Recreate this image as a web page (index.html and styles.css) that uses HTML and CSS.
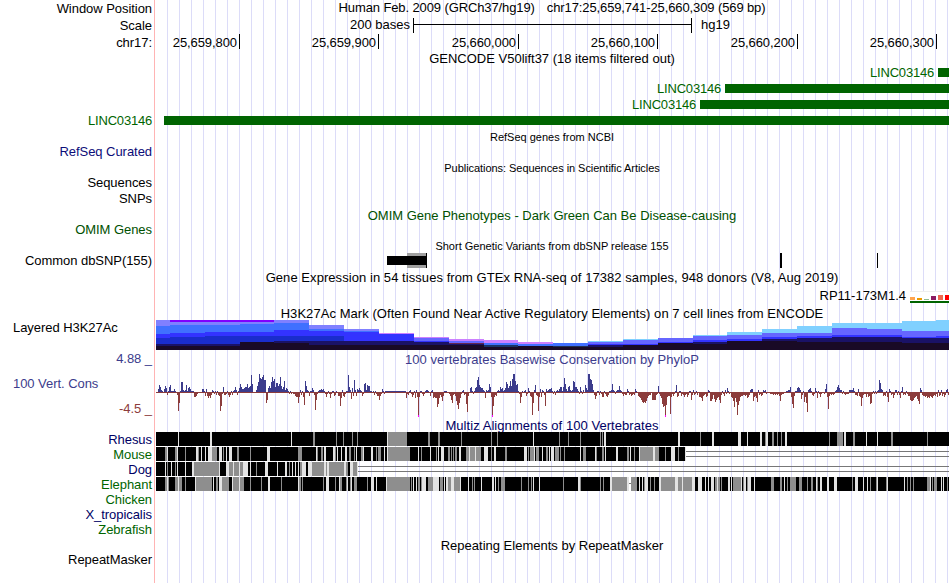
FILE: index.html
```html
<!DOCTYPE html>
<html lang="en">
<head>
    <meta charset="UTF-8">
    <title>Human chr17:25,659,741-25,660,309</title>
    <link rel="stylesheet" href="styles.css">
</head>
<body>
    <div class="browser">
        <div class="row h17"><div class="label">Window Position</div><div class="title header"><span>Human Feb. 2009 (GRCh37/hg19)</span><span>chr17:25,659,741-25,660,309 (569 bp)</span></div></div>
        <div class="row h17"><div class="label">Scale</div><div class="scale"><span>200 bases</span><i class="ruler"></i><span>hg19</span></div></div>
        <div class="row h17"><div class="label">chr17:</div><div class="ticks"><span>25,659,800</span><span>25,659,900</span><span>25,660,000</span><span>25,660,100</span><span>25,660,200</span><span>25,660,300</span></div></div>

        <div class="row h13"><div class="label"></div><div class="title">GENCODE V50lift37 (18 items filtered out)</div></div>
        <div class="row h16"><div class="label"></div><div class="gene"><span>LINC03146</span><i class="exon w11"></i></div></div>
        <div class="row h16"><div class="label"></div><div class="gene"><span>LINC03146</span><i class="exon w224"></i></div></div>
        <div class="row h16"><div class="label"></div><div class="gene"><span>LINC03146</span><i class="exon w249"></i></div></div>
        <div class="row h16"><div class="label gene-name">LINC03146</div><div class="gene"><i class="exon w785"></i></div></div>

        <div class="row h16"><div class="label"></div><div class="title small">RefSeq genes from NCBI</div></div>
        <div class="row h16"><div class="label navy">RefSeq Curated</div></div>
        <div class="row h15"><div class="label"></div><div class="title small tight">Publications: Sequences in Scientific Articles</div></div>
        <div class="row h16"><div class="label">Sequences</div></div>
        <div class="row h15"><div class="label">SNPs</div></div>
        <div class="row h16"><div class="label"></div><div class="title omim low">OMIM Gene Phenotypes - Dark Green Can Be Disease-causing</div></div>
        <div class="row h15"><div class="label omim">OMIM Genes</div></div>
        <div class="row h16"><div class="label"></div><div class="title small">Short Genetic Variants from dbSNP release 155</div></div>
        <div class="row h16"><div class="label">Common dbSNP(155)</div><svg id="dbsnp" width="794" height="16" viewBox="155 253 794 16"></svg></div>

        <div class="row h16"><div class="label"></div><div class="title wide">Gene Expression in 54 tissues from GTEx RNA-seq of 17382 samples, 948 donors (V8, Aug 2019)</div></div>
        <div class="row h20"><div class="label"></div><div class="gtex"><span>RP11-173M1.4</span><svg id="gtex" width="39" height="20" viewBox="910 285 39 20"></svg></div></div>

        <div class="row h15"><div class="label"></div><div class="title wide">H3K27Ac Mark (Often Found Near Active Regulatory Elements) on 7 cell lines from ENCODE</div></div>
        <div class="row h30"><div class="label left">Layered H3K27Ac</div><svg id="h3k27ac" width="794" height="30" viewBox="155 0 794 30"></svg></div>

        <div class="row h67">
            <div class="label limits blue"><span>4.88 _</span><span class="name">100 Vert. Cons</span><span class="min">-4.5 _</span></div>
            <div class="wiggle"><div class="title blue">100 vertebrates Basewise Conservation by PhyloP</div><svg id="phylop" width="794" height="50" viewBox="155 367 794 50"></svg></div>
        </div>

        <div class="row h15"><div class="label"></div><div class="title midnight wide">Multiz Alignments of 100 Vertebrates</div></div>
        <div class="row h15"><div class="label midnight">Rhesus</div><svg id="rhesus" width="794" height="15" viewBox="155 0 794 15"></svg></div>
        <div class="row h15"><div class="label green">Mouse</div><svg id="mouse" width="794" height="15" viewBox="155 0 794 15"></svg></div>
        <div class="row h15"><div class="label midnight">Dog</div><svg id="dog" width="794" height="15" viewBox="155 0 794 15"></svg></div>
        <div class="row h15"><div class="label green">Elephant</div><svg id="elephant" width="794" height="15" viewBox="155 0 794 15"></svg></div>
        <div class="row h15"><div class="label green">Chicken</div></div>
        <div class="row h15"><div class="label midnight">X_tropicalis</div></div>
        <div class="row h15"><div class="label green">Zebrafish</div></div>
        <div class="row h15"><div class="label"></div><div class="title">Repeating Elements by RepeatMasker</div></div>
        <div class="row h15"><div class="label">RepeatMasker</div></div>
    </div>
    <script src="tracks.js"></script>
</body>
</html>
```
FILE: styles.css
```css
body {
    margin: 0;
    background-color: #fff;
    font-family: "Liberation Sans", Arial, Helvetica, sans-serif;
    font-size: 13px;
    color: #000;
}

/* red line marks the label edge, blue guidelines repeat every 12px */
.browser {
    width: 949px;
    height: 583px;
    overflow: hidden;
    background-image:
        linear-gradient(#ffb4b4, #ffb4b4),
        repeating-linear-gradient(to right, #dcdcf8 0, #dcdcf8 1px, transparent 1px, transparent 12px);
    background-size: 1px 100%, 782px 100%;
    background-position: 154px 0, 167px 0;
    background-repeat: no-repeat;
}

.row {
    display: grid;
    grid-template-columns: 155px 794px;
    white-space: nowrap;
}

.h13 { height: 13px; line-height: 15px; }
.h15 { height: 15px; line-height: 16px; }
.h16 { height: 16px; line-height: 16px; }
.h17 { height: 17px; line-height: 17px; }
.h20 { height: 20px; line-height: 21px; }
.h30 { height: 30px; line-height: 16px; }
.h67 { height: 67px; line-height: 17px; }

.label {
    padding-right: 3px;
    text-align: right;
    letter-spacing: -0.05px;
}

.label.left {
    padding-left: 13px;
    text-align: left;
}

.h16 .label {
    line-height: 15px;
}

.title {
    text-align: center;
}

.h15 .title,
.h16 .title {
    line-height: 18px;
}

.h16 .title.low {
    line-height: 20px;
}

.title.small {
    font-size: 11px;
}

.h15 .title.tight {
    line-height: 16px;
    letter-spacing: -0.05px;
}

.title.wide {
    letter-spacing: 0.06px;
}

.header {
    display: flex;
    justify-content: center;
    gap: 12px;
    line-height: 15px;
    letter-spacing: -0.11px;
}

.green { color: #006400; }
.omim { color: #005000; }
.navy { color: #0c0c78; }
.midnight { color: #000064; }
.blue { color: #3c3c8c; }

.scale {
    display: flex;
    align-items: flex-start;
    padding-left: 195px;
    line-height: 15px;
}

.ruler {
    box-sizing: border-box;
    width: 279px;
    height: 15px;
    margin: 1px 9px 0 3px;
    border: solid #000;
    border-width: 0 1px;
    background: linear-gradient(#000, #000) 0 6px / 100% 1px no-repeat;
}

.ticks {
    display: grid;
    grid-template-columns: 85px 139px 140px 139px 140px 139px;
}

.ticks span {
    height: 15px;
    padding-right: 2px;
    border-right: 1px solid #000;
    text-align: right;
    letter-spacing: -0.08px;
}

.gene {
    display: flex;
    justify-content: flex-end;
    gap: 4px;
    color: #006400;
    line-height: 17px;
    letter-spacing: -0.2px;
}

.h16 .gene-name {
    color: #006400;
    line-height: 17px;
    letter-spacing: -0.2px;
}

.exon {
    height: 9px;
    margin-top: 4px;
    background-color: #006400;
}

.w11 { width: 11px; }
.w224 { width: 224px; }
.w249 { width: 249px; }
.w785 { width: 785px; }

.gtex {
    display: flex;
    justify-content: flex-end;
    gap: 4px;
}

.limits {
    display: flex;
    flex-direction: column;
    justify-content: space-between;
}

.limits .name {
    padding-left: 13px;
    text-align: left;
}

.limits .min {
    color: #8c3c3c;
}

.wiggle .title {
    height: 17px;
    line-height: 19px;
    letter-spacing: 0.04px;
}

svg {
    display: block;
    shape-rendering: crispEdges;
}
```
FILE: tracks.js
```js
function rect(id, x, y, w, h, fill) {
    const r = document.createElementNS('http://www.w3.org/2000/svg', 'rect');
    r.setAttribute('x', x);
    r.setAttribute('y', y);
    r.setAttribute('width', w);
    r.setAttribute('height', h);
    r.setAttribute('fill', fill);
    document.getElementById(id).appendChild(r);
}

// variants
rect('dbsnp', 407, 253, 19, 15, '#a0a0a0');
rect('dbsnp', 387, 256, 39, 9, '#000');
rect('dbsnp', 426, 253, 1, 15, '#000');
rect('dbsnp', 780, 253, 2, 15, '#000');
rect('dbsnp', 877, 253, 1, 15, '#000');

// tissue expression
rect('gtex', 910, 291, 39, 10, '#fff');
rect('gtex', 910, 291, 39, 1, '#eee');
[[910, 3, '#ffa54f'], [917, 2, '#ee9a00'], [924, 1, '#8fbc8f'], [931, 4, '#8b1c62'], [938, 5, '#ee6a50'], [945, 5, '#ff0000']]
    .forEach(b => rect('gtex', b[0], 300 - b[1], 5, b[1], b[2]));
rect('gtex', 910, 301, 39, 2, '#006400');

// histone mark: left edge, then [top, colour] layers
const L = '#8080ff', B = '#4070ff', M = '#3333ff', R = '#1a2dcc', N = '#1a1266', K = '#190a26', P = '#cc80ff', C = '#80d0ff', S = '#6666ff', V = '#8000ff';
const marks = [
    [156, 0, L, 6, B, 14, M, 18, R, 24, N, 26, K],
    [170, 0, V, 2, L, 5, B, 13, M, 17, R, 24, N, 26, K],
    [205, 0, V, 2, L, 5, B, 12, M, 16, R, 24, N, 26, K],
    [240, 0, V, 2, L, 4, B, 12, M, 16, R, 22, K],
    [274, 0, L, 3, B, 10, M, 16, R, 21, N, 23, K],
    [309, 5, L, 9, B, 11, M, 16, R, 21, N, 25, K],
    [344, 9, L, 11, B, 12, M, 21, N, 25, K],
    [379, 13, P, 14, M, 21, N, 25, K],
    [414, 17, P, 18, S, 21, M, 22, N, 25, K],
    [449, 19, P, 21, S, 23, '#66264d', 24, N, 25, K],
    [484, 20, P, 23, B, 25, '#1a3366', 27, K],
    [518, 22, P, 24, B, 26, K],
    [553, 23, B, 26, '#203050', 27, K],
    [588, 21, C, 22, S, 24, M, 25, N, 27, K],
    [623, 19, C, 20, S, 24, M, 25, K],
    [658, 18, S, 22, M, 23, K],
    [693, 15, C, 16, S, 20, M, 22, N, 24, K],
    [727, 12, C, 15, S, 19, M, 21, K],
    [762, 9, C, 13, S, 17, M, 19, N, 21, K],
    [797, 6, C, 13, S, 16, M, 18, N, 22, K],
    [832, 3, C, 8, S, 15, M, 17, N, 22, K],
    [867, 3, C, 9, S, 15, M, 17, N, 22, K],
    [902, 1, C, 11, S, 17, M, 18, N, 23, K],
    [936, 0, C, 11, S, 16, M, 18, N, 23, K],
    [949]
];
for (let i = 0; i < marks.length - 1; i++) {
    const m = marks[i];
    for (let j = 1; j < m.length; j += 2) {
        rect('h3k27ac', m[0], m[j], marks[i + 1][0] - m[0], 30 - m[j], m[j + 1]);
    }
}

// conservation scores: start position, then one value per pixel
const scores = [
    [158, 3, 7, 5, 2, 1], [164, 3, 6, 4, -3, 1, 5, 7, 1, 1, 1, 3, 1, -1, -3, -19, -11, 1, 10, 10, 2, 1, 2, 7, 1, 4, 5, 3, 1, 1, 1, -5, -5, -4, -2],
    [202, 3, 3, 1, -4, 3, -4, -6, -4, -6, -3, 2, 1, -2, 1, -3, 1, -3, -4, -19, -14, -2, 5, -3, -3, -2, 1, -3, -5, -3, 1, -3, 1, 2, 5, 2, -3, 1, 4, 8, 5, 3, 3, 4, 5, 5, 8, 4, 5, 6, 17, 8],
    [256, 2, 6, 10, 18, 14, 13, 15, 17, 12, 12, -11, -8, 4, 6, 4, 10, 15, 11, 13, 5, 9, 9, 6, 8, 15, 6, 3, 5, 11, 2, 4, 3, 1, -2, 1, -2],
    [293, -2, -2, -4, -5, -5, -11, -5, 2, -3, 1, -5, -13, 11, 6, 2, 1, -4, 1, 1, 4, 2, -3, -18, -8, -2, 1, 2, 2, 3, 2, 3, 1, -2, -5, -2, 1, -2, -6, -2, 1, 1, -4, -3, 1],
    [338, -4, -4, -14, -6, 2, -4, -5, -2, 1, 1, 17, 5, 2, -7, 4, -4, 12, 2, -4, 3, 2, 4, 2, 1, -4, -2, 8, 9, 2, 7, 6, 6, 1, 1],
    [373, 1, -3, 1, -2, -4, -4, -8, -4, -2, 3, 1, -2, 1, 1, 1, 1, 1, 1, 1, 1, 1, 1, 1, 1, 1, 1, 1, 1, 1, 1, 1, 1, 1, -6, -2, -3, 1, 2, -2, -5, -3, 1],
    [415, -6, 2, -5, -25, -5, 1, 1, -2, -4, -2, 1, 2, 2, 1],
    [430, -4, 1, 2, -6, -5, -6, -6, -15, -12, -6, -3, -5, -9, -4, 1, 1, 1], [449, -2, -4, -8, -11, -3, -2, -4, -9, -13, -17, -11, -6, -2, 1, 2, -3, -2, -12, -20, -4],
    [470, 4, 5, 1, -2, 1, 4, 5, 12, 15, 7, 5, 4, 4, 2, 1, -6, 2, 1],
    [488, 2, 8, 5, -5, -25, -14, -5, -3, -4, 1, 2, 1, 5, 3, 4, 1, 2, 4, 10, 8, 4, 6, 11, 6, 13, 18, 18, 11, 7, 8, 1, -2, -11, -5, 1],
    [524, 1, 2, -4, -2, 4, 1, -4, -5, -23, -11, 2, 7, -3, -4, -19, -5, 3, -5, 2, 1, -3, -14, 3, 1, 2, 3, 3, 4, 1, -2, 1, -3, 1, 2, 1],
    [559, 3, 5, 5, 1, 5, 14, 8, 3, 1, 5, 6, 2, 1, 2, 11, 10, 5, 5, 3, 1, -2, 5, 1, -2, 2],
    [585, 7, 4, 2, 18, 18, 13, 12, 8, 2],
    [594, -3, -7, -4, 1, 1, -3, 1, -2, -5, -5, 1, -2, -4, -5, -3, 1, 1, 2, 8, 2, 1, -2, 1, 2, 2, 6, 2, 1, -2, -4, -2, -3, -3, 3, 1, -3, -2, -4, -3, -2, -3, 3, 1],
    [638, -4, -5, -6, -8, -10, -11, -10, -11, -9, -6, -4, -3, -3],
    [652, -8, -8, -8, -8, -3, -2, 6, -2, -4, -6, -12, -15, -14, -25, -13, -5, -4, -4, -22, -5, -2, -4, -2, 1, 7, -5, -4, 1, 1, -4, -2, -3, -5, -3],
    [686, -2, -5, -3, 1, 1, -8, -3, 2, -3, -2, 1, -3],
    [699, -5, -5, -6, -9, -4, -3, -2, -5, -4, 2, 1, -9, -9, -7, -3, -7, -10, -8, -6, -5, -8, -11, -3, 1, -2, -4, 2, -2, 4, 1, -2],
    [731, -5, -6, -9, -15, -6, -10, -23, -13, -9, -5, -4, -4, -3, -3, -4, -3, -6, -5, -3, 2],
    [751, 3, 3, -9, -5, -4, -6, -10, 2, -3, -2, -4, -3, 2, 1, 2, -2],
    [770, -2, -2, -2, -3, -2, -3, -2, -3, -2, -4, -9, -3, -2, -2, -1, -1, 1, 1, 2, 2, 5, -5, -12, -16, -4, 1],
    [796, 1, 4, 5, 4, 2, -7, -3, 1, -10, -5, -11, -20, 2, 3, 4, 1, -3, -4, -2, 4, 1, -6, 1, -2, -5, -2],
    [824, -2, 3, 8, -5, -17, -4, -2, -3, -2, -3, -2, 1],
    [836, 2, 5, 7, 4, 2, 2, -2, 1, -2, -3, -2, -2, -2, 2, 2, 2, 2, 4, 1, -3, -3, -4, 3, -4, -5, -14, -6, -3, -2, -2, -5, -2, -5, -4, -12, -11, -2, 1, -2, 1, -2, 1, 2, 12, 9, 3, 2],
    [883, -4, -3, -4, 1, -5, -10, 3, 1, -3, -2, -6, -3, 2, 2, -3, 1, -3, -6, 1, 5, -3, -2, -3, 1, -2, -4, -4, -8, -9, -9, -8, -6, -5, -4, -7, -9, -12, 4, 2, -3, -4, -4, -5, -4, -6, -5, -6, -4, -5, -6, -4, -3, -4, -2, -5, 2, -4, -3, 2, -4, -2, -5, -3, 2, 3, -3]
];
rect('phylop', 156, 392, 793, 1, '#8c3c3c');
scores.forEach(s => s.slice(1).forEach((v, i) => {
    if (v > 0) {
        rect('phylop', s[0] + i, 392 - v, 1, v, '#3c3c8c');
    } else {
        rect('phylop', s[0] + i, 392, 1, -v, '#8c3c3c');
    }
}));
// scores clipped at the lower limit
[418, 492, 665].forEach(x => rect('phylop', x, 415, 1, 2, '#f0f'));

// alignments: black with grey (g) and light (l) stretches
function align(id, end, stripes) {
    rect(id, 156, 0, end - 156, 14, '#000');
    stripes.split(' ').forEach(s => {
        const p = s.slice(1).split('-');
        rect(id, p[0], 0, p[1] || 1, 14, s[0] === 'g' ? '#8e8e8e' : '#e3e3e3');
    });
    if (end < 949) {
        rect(id, end, 4, 949 - end, 1, '#777');
        rect(id, end, 9, 949 - end, 1, '#777');
    }
}
align('rhesus', 949, 'l178 l210-2 l291 g313-2 g336 g343 g352 g357 l387 g388-19 g428-2 g438-2 g461 g491 g497 l533 g559 g568 g580 g600 g602 l604-2 l678-2 g700 l712-2 l738-3 l747 l760-2 g765 l766-2 g772-2 g777 g781 l785-2 g829 g837-6 l844-2 g853-2 l866 l877 g891-2 g927');
align('mouse', 686, 'g165-2 l167 g175-2 l177 g185 l196-2 g198 l201 l205 l208-4 g212-5 l219-3 g223 l226 l229-3 g237-2 g250 l267-3 g298-4 l316 g317 g321-2 l324-2 l333-2 g335 l337 l341 l345-2 g349-2 g354 l356 g361-2 l363 l371-2 g376 g378-3 l384 l387 g388-22 l418 g421 l430 g436 l438 l441-3 g448-2 g451 g453 g455-2 l459-2 g466-3 l469 g470-5 l475 g476-5 l484-4 g491 l494-2 g505-2 l524-3 g528 g530-4 l534 g536-3 l542 g546-2 l549 l551-3 g555-4 g560 g564 l580 g583-3 l595 g596 g602-2 l605 l616-2 g627-2 l630 g634 l639 g640-13 l653-2 g655-4 g665 l671-4 g678 l685');
align('dog', 358, 'l165 g167 l171 g175 l177 l185 l192-2 g194-25 l219 l226-3 g229-4 l233 g234-5 l239 g240-3 l243-5 l250 g256 l265-3 l277 l285-2 g289 l292 l295 l298 g300-2 l302-4 l308-4 g312-12 l324-2 g326 l327-2 g329-15 l344-2 g346-2 l350-3 g353-4 l357');
align('elephant', 949, 'g165-2 l167 g168 g175-3 l178 g179-3 g185 l195 g196-16 l213 g216-2 l219-3 g222-7 l232 g233-6 l239 g240-4 g250 g261 l268-2 g281 l298 g299-2 g302 g323 l326-3 g335 l339 g340-2 g346 l347 g350 l351 g354-3 g367 l371-3 l376 l386 g387-23 g411 l413 l416 g418-2 g421 l422-4 g428-5 l433-5 l438 g440-3 l444 l446-2 g448-3 l451-3 g454-6 l460 l468 g472 g474 l481 l492-2 l495 g498 g501-4 g521 g528 g531 l533 l539 g563 l578-2 g580 g600 g603 l610-2 g612-15 l627-4 g631-6 l639 l642 g644 l645-3 g650 g654 l659-2 g661-14 l675-3 g678-3 g681 l682 g683-9 l692-3 l698-4 l705 l708 l711-3 g715-2 l717 g718-2 g721 l728-2 l731 g733-8 l741 g743 l744-2 g747 l748-3 l754 g771-3 g780-2 l784 g787 g790-6 g799-3 g807 g811-2 l816 g817 l820-2 l827-2 l834-3 g852 l855-3 l863 l867 g870 g876 l877 g886 l887 l904 g907 g910 g913 g927-3 l930 g932 g934-3 l941 l943 g947');
// unaligned gap
rect('elephant', 629, 0, 2, 14, '#fff');
rect('elephant', 629, 6, 2, 1, '#777');
```
